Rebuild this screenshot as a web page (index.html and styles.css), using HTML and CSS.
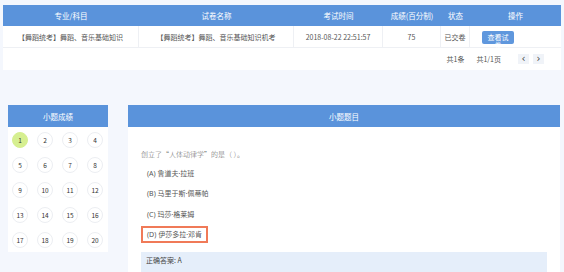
FILE: index.html
```html
<!DOCTYPE html>
<html lang="zh">
<head>
<meta charset="utf-8">
<link rel="stylesheet" href="styles.css">
</head>
<body>
<div class="page">
  <div class="table-card">
    <div class="row head">
      <div class="cell">专业/科目</div>
      <div class="cell">试卷名称</div>
      <div class="cell">考试时间</div>
      <div class="cell">成绩(百分制)</div>
      <div class="cell">状态</div>
      <div class="cell">操作</div>
    </div>
    <div class="row data">
      <div class="cell">【舞蹈统考】舞蹈、音乐基础知识</div>
      <div class="cell">【舞蹈统考】舞蹈、音乐基础知识机考</div>
      <div class="cell">2018-08-22 22:51:57</div>
      <div class="cell">75</div>
      <div class="cell">已交卷</div>
      <div class="cell op"><span class="btn">查看试卷</span></div>
    </div>
    <div class="pager">
      <span class="total">共1条</span>
      <span class="pages">共1/1页</span>
      <span class="pbtn">&lsaquo;</span>
      <span class="pbtn">&rsaquo;</span>
    </div>
  </div>

  <div class="lower">
    <div class="panel score">
      <div class="panel-head">小题成绩</div>
      <div class="grid">
        <span class="num done">1</span><span class="num">2</span><span class="num">3</span><span class="num">4</span>
        <span class="num">5</span><span class="num">6</span><span class="num">7</span><span class="num">8</span>
        <span class="num">9</span><span class="num">10</span><span class="num">11</span><span class="num">12</span>
        <span class="num">13</span><span class="num">14</span><span class="num">15</span><span class="num">16</span>
        <span class="num">17</span><span class="num">18</span><span class="num">19</span><span class="num">20</span>
      </div>
    </div>
    <div class="panel question">
      <div class="panel-head">小题题目</div>
      <div class="q-body">
        <p class="q-text">创立了“人体动律学”的是（ ）。</p>
        <div class="opt">(A) 鲁道夫·拉班</div>
        <div class="opt">(B) 马里于斯·佩蒂帕</div>
        <div class="opt">(C) 玛莎·格莱姆</div>
        <div class="opt chosen">(D) 伊莎多拉·邓肯</div>
        <div class="answer">正确答案: A</div>
      </div>
    </div>
  </div>
</div>
</body>
</html>
```

FILE: styles.css
```css
* { box-sizing: border-box; }
html, body {
  margin: 0;
  padding: 0;
  background: #f4f7fd;
  font-family: "Noto Sans CJK SC", "Noto Sans", sans-serif;
  color: #555;
  font-size: 7px;
  overflow: hidden;
}
.page {
  padding: 5px 3px 0 3px;
  width: 564px;
  height: 272px;
}
.table-card {
  width: 558px;
  background: #fff;
}
.row {
  display: grid;
  grid-template-columns: 136px 155px 89px 58px 29px 91px;
}
.row.head {
  height: 21px;
  background: #5a93db;
  color: #fff;
  font-size: 7.5px;
}
.row .cell {
  display: flex;
  align-items: center;
  justify-content: center;
  white-space: nowrap;
}
.row.data {
  height: 22px;
  border-bottom: 1px solid #eef0f4;
}
.row.data .cell {
  border-right: 1px solid #eef0f4;
}
.row.data .cell:last-child {
  border-right: none;
}
.row.data .cell.op {
  justify-content: flex-start;
  align-items: flex-start;
  padding: 5px 0 0 12px;
}
.btn {
  display: block;
  width: 32px;
  height: 13px;
  padding: 1.5px 4px 0;
  background: #5f97dd;
  color: #fff;
  border-radius: 2px;
  font-size: 7px;
  line-height: 8px;
  text-align: center;
  white-space: normal;
  overflow: visible;
  font-family: "Noto Sans CJK SC", serif;
}
.pager {
  height: 22px;
  display: flex;
  align-items: center;
  justify-content: flex-end;
  padding-right: 17px;
  font-size: 7px;
  color: #555;
}
.pager .total { margin-right: 12px; }
.pager .pages { margin-right: 13px; }
.pbtn {
  width: 11px;
  height: 10px;
  background: #f0f3f8;
  display: flex;
  align-items: center;
  justify-content: center;
  font-size: 10px;
  line-height: 1;
  margin-left: 4px;
  color: #444;
  font-family: "DejaVu Sans", sans-serif;
}
.lower {
  display: flex;
  gap: 20px;
  margin-top: 35px;
  padding-left: 5px;
}
.panel {
  background: #fff;
}
.panel-head {
  height: 22px;
  background: #5a93db;
  color: #fff;
  font-size: 7.5px;
  display: flex;
  align-items: center;
  justify-content: center;
}
.score {
  width: 100px;
  height: 147px;
}
.grid {
  display: grid;
  grid-template-columns: repeat(4, 16px);
  column-gap: 9px;
  row-gap: 9px;
  padding: 5px 5px 4px 4px;
}
.num {
  width: 16px;
  height: 16px;
  border-radius: 50%;
  border: 1px solid #eceef2;
  display: flex;
  align-items: center;
  justify-content: center;
  font-size: 6.5px;
  color: #333;
}
.num.done {
  background: #d6ef90;
  border-color: #d6ef90;
}
.question {
  width: 432px;
  height: 170px;
}
.q-body {
  padding: 22px 13px 0 13px;
}
.q-text {
  margin: 0 0 5.5px;
  line-height: 10px;
  font-size: 7px;
  color: #666;
  font-family: "Noto Sans CJK SC", serif;
  font-weight: 300;
}
.opt {
  display: table;
  height: 17px;
  padding: 0 5px;
  border: 1px solid transparent;
  line-height: 15px;
  margin-bottom: 3.5px;
  color: #555;
  font-family: "Noto Sans", "Noto Sans CJK SC", sans-serif;
}
.opt.chosen {
  border: 2px solid #f07a58;
  padding: 0 4px;
  line-height: 13px;
}
.answer {
  margin-top: 9px;
  background: #e5eefa;
  padding: 3px 5px;
  line-height: 10px;
  height: 22px;
  color: #444;
}
```
